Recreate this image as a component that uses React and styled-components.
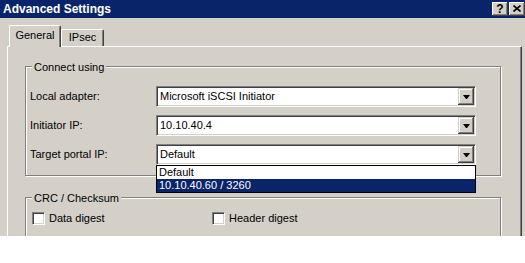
import React from 'react';
import styled, { createGlobalStyle } from 'styled-components';

const Global = createGlobalStyle`
  html, body { margin: 0; padding: 0; background: #fff; }
  body { font-family: "Liberation Sans", Arial, sans-serif; font-size: 11px; color: #000; }
  * { box-sizing: border-box; }
`;

const Window = styled.div`
  width: 525px;
  height: 236px;
  overflow: hidden;
  background: #d4d0c8;
  display: flex;
  flex-direction: column;
`;

const TitleBar = styled.div`
  height: 18px;
  flex-shrink: 0;
  background: #0a246a;
  display: flex;
  justify-content: space-between;
  align-items: flex-start;
`;

const Title = styled.span`
  color: #fff;
  font-weight: bold;
  font-size: 12px;
  line-height: 18px;
  padding-left: 3px;
`;

const CaptionButtons = styled.div`
  display: flex;
  gap: 1px;
  margin-top: 2px;
`;

const CaptionButton = styled.div`
  width: 16px;
  height: 14px;
  background: #d4d0c8;
  box-shadow: inset -1px -1px 0 #404040, inset 1px 1px 0 #fff, inset -2px -2px 0 #808080;
  display: flex;
  align-items: center;
  justify-content: center;
  font-weight: bold;
  font-size: 12px;
  line-height: 14px;
  padding-bottom: 1px;
`;

const TabRow = styled.div`
  display: flex;
  align-items: flex-end;
  height: 21px;
  margin-top: 7px;
  padding-left: 9px;
  flex-shrink: 0;
`;

const Tab = styled.div`
  position: relative;
  z-index: ${p => (p.$active ? 1 : 0)};
  height: ${p => (p.$active ? '22px' : '17px')};
  width: ${p => p.$w}px;
  margin-bottom: ${p => (p.$active ? '-1px' : '0')};
  background: #d4d0c8;
  border-top: 1px solid #fff;
  border-left: 1px solid #fff;
  border-right: 1px solid #404040;
  border-radius: 2px 2px 0 0;
  box-shadow: inset -1px 0 0 #808080;
  display: flex;
  justify-content: center;
  padding-top: ${p => (p.$active ? '3px' : '1px')};
  line-height: 13px;
`;

const Panel = styled.div`
  flex: 1;
  margin-left: 7px;
  width: 515px;
  border-top: 1px solid #fff;
  border-left: 1px solid #fff;
  border-right: 1px solid #404040;
  box-shadow: inset -1px 0 0 #808080;
  padding: 19px 0 0 17px;
`;

const Group = styled.div`
  position: relative;
  width: 476px;
  height: ${p => p.$h}px;
  margin-top: ${p => p.$mt || 0}px;
  border: 1px solid #808080;
  box-shadow: inset 1px 1px 0 #fff, 1px 1px 0 #fff;
  padding: ${p => p.$pad};
`;

const Legend = styled.span`
  position: absolute;
  top: -6px;
  left: 6px;
  padding: 0 2px;
  background: #d4d0c8;
  line-height: 13px;
`;

const FormGrid = styled.div`
  display: grid;
  grid-template-columns: 126px 320px;
  row-gap: 8px;
  align-items: center;
`;

const Label = styled.span`
  line-height: 13px;
`;

const ComboWrap = styled.div`
  position: relative;
`;

const Combo = styled.div`
  height: 21px;
  background: #fff;
  border: 1px solid;
  border-color: #808080 #fff #fff #808080;
  box-shadow: inset 1px 1px 0 #404040, inset -1px -1px 0 #d4d0c8;
  display: flex;
  align-items: center;
  padding: 1px 1px 1px 3px;
`;

const ComboText = styled.span`
  flex: 1;
  line-height: 13px;
`;

const DropButton = styled.div`
  width: 16px;
  height: 17px;
  background: #d4d0c8;
  box-shadow: inset -1px -1px 0 #404040, inset 1px 1px 0 #d4d0c8, inset -2px -2px 0 #808080, inset 2px 2px 0 #fff;
  display: flex;
  align-items: center;
  justify-content: center;
`;

const List = styled.div`
  position: absolute;
  top: 100%;
  left: 0;
  width: 320px;
  background: #fff;
  border: 1px solid #000;
  z-index: 2;
`;

const ListItem = styled.div`
  height: 13px;
  line-height: 13px;
  padding-left: 2px;
  background: ${p => (p.$sel ? '#0a246a' : '#fff')};
  color: ${p => (p.$sel ? '#fff' : '#000')};
`;

const CheckRow = styled.div`
  display: flex;
`;

const CheckOption = styled.label`
  width: 180px;
  display: flex;
  align-items: center;
  gap: 4px;
  line-height: 13px;
`;

const CheckBox = styled.span`
  width: 13px;
  height: 13px;
  background: #fff;
  border: 1px solid;
  border-color: #808080 #fff #fff #808080;
  box-shadow: inset 1px 1px 0 #404040, inset -1px -1px 0 #d4d0c8;
`;

const Arrow = () => (
  <svg width="7" height="4" viewBox="0 0 7 4">
    <path d="M0 0H7L4 4H3Z" fill="#000" />
  </svg>
);

const CloseGlyph = () => (
  <svg width="8" height="7" viewBox="0 0 8 7">
    <path d="M0.5 0.5L7.5 6.5M7.5 0.5L0.5 6.5" stroke="#000" strokeWidth="1.6" />
  </svg>
);

const ComboBox = ({ value, open, items }) => (
  <ComboWrap>
    <Combo>
      <ComboText>{value}</ComboText>
      <DropButton><Arrow /></DropButton>
    </Combo>
    {open && (
      <List>
        {items.map((it, i) => (
          <ListItem key={it} $sel={i === 1}>{it}</ListItem>
        ))}
      </List>
    )}
  </ComboWrap>
);

export default function App() {
  return (
    <>
      <Global />
      <Window>
        <TitleBar>
          <Title>Advanced Settings</Title>
          <CaptionButtons>
            <CaptionButton>?</CaptionButton>
            <CaptionButton><CloseGlyph /></CaptionButton>
          </CaptionButtons>
        </TitleBar>
        <TabRow>
          <Tab $active $w={52}>General</Tab>
          <Tab $w={43}>IPsec</Tab>
        </TabRow>
        <Panel>
          <Group $h={110} $pad="19px 0 0 4px">
            <Legend>Connect using</Legend>
            <FormGrid>
              <Label>Local adapter:</Label>
              <ComboBox value="Microsoft iSCSI Initiator" />
              <Label>Initiator IP:</Label>
              <ComboBox value="10.10.40.4" />
              <Label>Target portal IP:</Label>
              <ComboBox value="Default" open items={['Default', '10.10.40.60 / 3260']} />
            </FormGrid>
          </Group>
          <Group $h={60} $mt={21} $pad="14px 0 0 6px">
            <Legend>CRC / Checksum</Legend>
            <CheckRow>
              <CheckOption><CheckBox />Data digest</CheckOption>
              <CheckOption><CheckBox />Header digest</CheckOption>
            </CheckRow>
          </Group>
        </Panel>
      </Window>
    </>
  );
}
